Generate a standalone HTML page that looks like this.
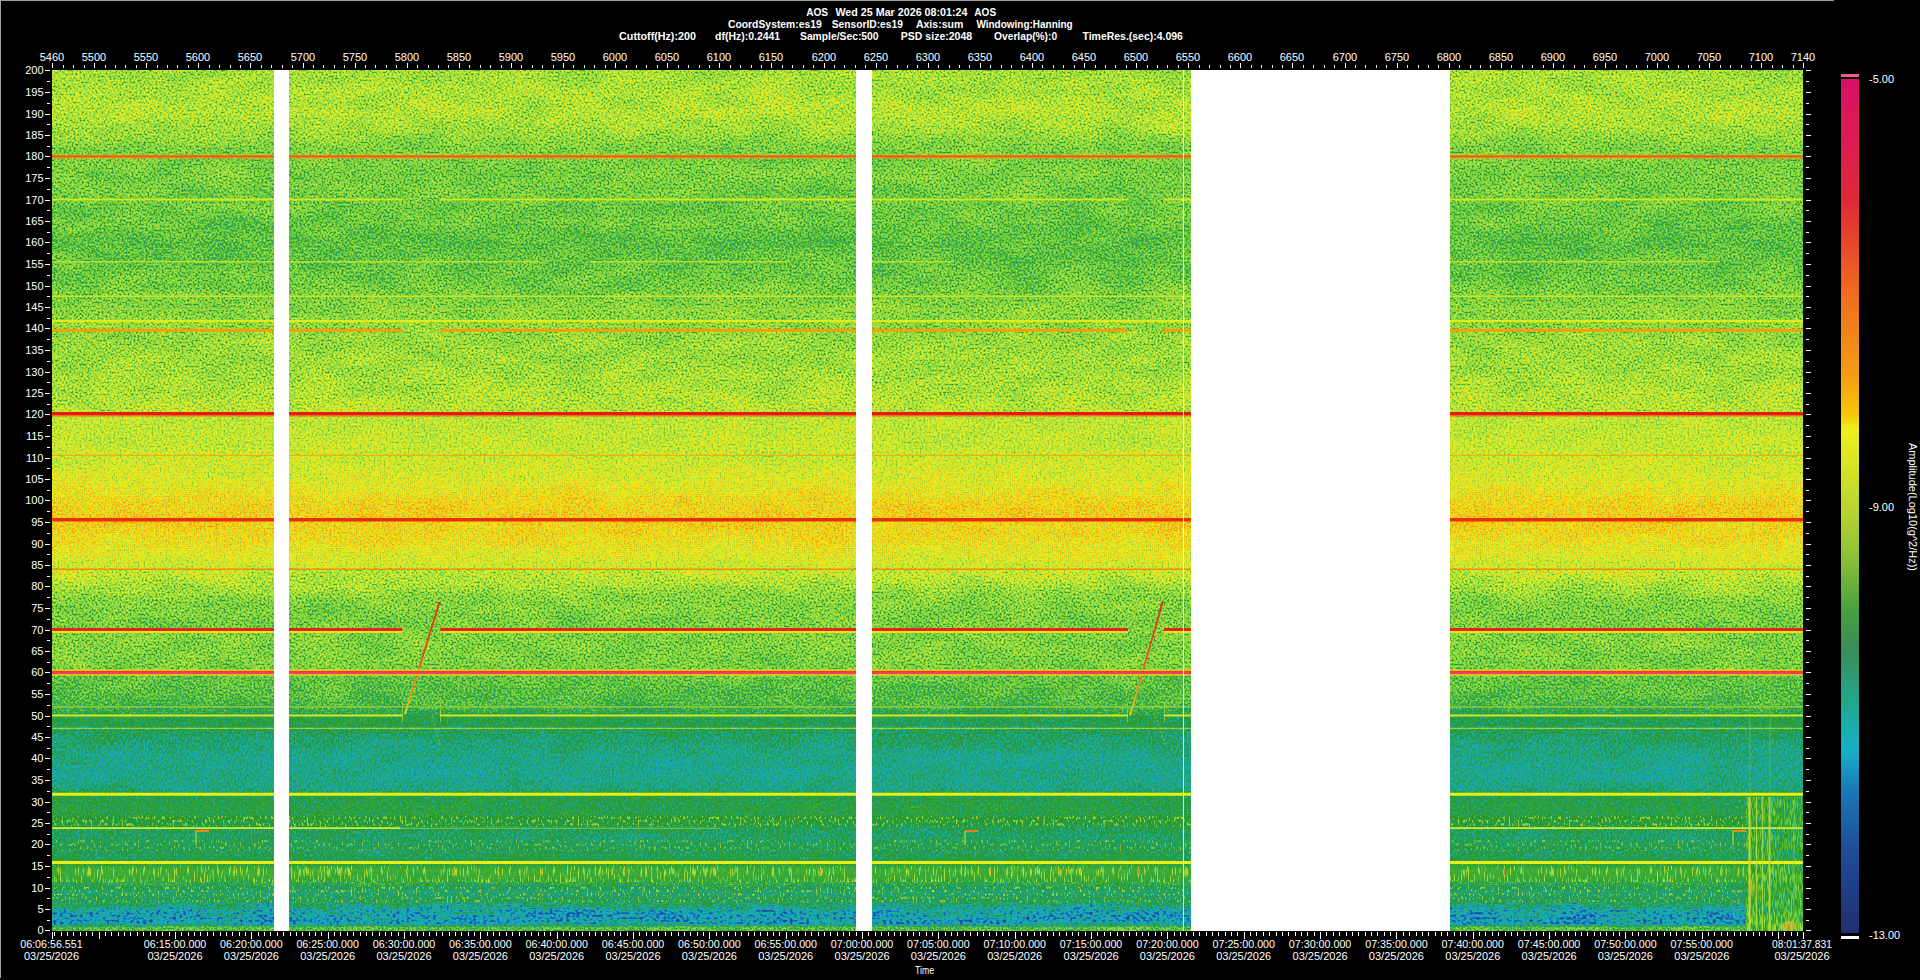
<!DOCTYPE html>
<html><head><meta charset="utf-8"><title>Spectrogram</title><style>
html,body{margin:0;padding:0;background:#000;width:1920px;height:980px;overflow:hidden}
svg{display:block}
text{font-family:"Liberation Sans",sans-serif;fill:#fff}
</style></head><body>
<svg width="1920" height="980" viewBox="0 0 1920 980">
<defs>
<linearGradient id="prof" x1="0" y1="70" x2="0" y2="931" gradientUnits="userSpaceOnUse">
<stop offset="0.0006" stop-color="rgb(125,125,125)"/>
<stop offset="0.0256" stop-color="rgb(128,128,128)"/>
<stop offset="0.0505" stop-color="rgb(131,131,131)"/>
<stop offset="0.0705" stop-color="rgb(125,125,125)"/>
<stop offset="0.0905" stop-color="rgb(113,113,113)"/>
<stop offset="0.1254" stop-color="rgb(112,112,112)"/>
<stop offset="0.1754" stop-color="rgb(108,108,108)"/>
<stop offset="0.2003" stop-color="rgb(103,103,103)"/>
<stop offset="0.2403" stop-color="rgb(108,108,108)"/>
<stop offset="0.2703" stop-color="rgb(115,115,115)"/>
<stop offset="0.3102" stop-color="rgb(122,122,122)"/>
<stop offset="0.3502" stop-color="rgb(125,125,125)"/>
<stop offset="0.3801" stop-color="rgb(130,130,130)"/>
<stop offset="0.4101" stop-color="rgb(134,134,134)"/>
<stop offset="0.4401" stop-color="rgb(136,136,136)"/>
<stop offset="0.4750" stop-color="rgb(142,142,142)"/>
<stop offset="0.5000" stop-color="rgb(152,152,152)"/>
<stop offset="0.5200" stop-color="rgb(156,156,156)"/>
<stop offset="0.5400" stop-color="rgb(152,152,152)"/>
<stop offset="0.5649" stop-color="rgb(143,143,143)"/>
<stop offset="0.5899" stop-color="rgb(133,133,133)"/>
<stop offset="0.6149" stop-color="rgb(116,116,116)"/>
<stop offset="0.6398" stop-color="rgb(112,112,112)"/>
<stop offset="0.6598" stop-color="rgb(115,115,115)"/>
<stop offset="0.6898" stop-color="rgb(113,113,113)"/>
<stop offset="0.7098" stop-color="rgb(105,105,105)"/>
<stop offset="0.7347" stop-color="rgb(99,99,99)"/>
<stop offset="0.7497" stop-color="rgb(84,84,84)"/>
<stop offset="0.7647" stop-color="rgb(79,79,79)"/>
<stop offset="0.7797" stop-color="rgb(74,74,74)"/>
<stop offset="0.7997" stop-color="rgb(69,69,69)"/>
<stop offset="0.8196" stop-color="rgb(68,68,68)"/>
<stop offset="0.8346" stop-color="rgb(71,71,71)"/>
<stop offset="0.8446" stop-color="rgb(82,82,82)"/>
<stop offset="0.8696" stop-color="rgb(84,84,84)"/>
<stop offset="0.8895" stop-color="rgb(76,76,76)"/>
<stop offset="0.9145" stop-color="rgb(79,79,79)"/>
<stop offset="0.9295" stop-color="rgb(94,94,94)"/>
<stop offset="0.9445" stop-color="rgb(89,89,89)"/>
<stop offset="0.9545" stop-color="rgb(71,71,71)"/>
<stop offset="0.9645" stop-color="rgb(79,79,79)"/>
<stop offset="0.9720" stop-color="rgb(69,69,69)"/>
<stop offset="0.9769" stop-color="rgb(59,59,59)"/>
<stop offset="0.9894" stop-color="rgb(54,54,54)"/>
<stop offset="0.9934" stop-color="rgb(66,66,66)"/>
<stop offset="0.9954" stop-color="rgb(102,102,102)"/>
<stop offset="0.9994" stop-color="rgb(102,102,102)"/>
</linearGradient>
<linearGradient id="bbg" x1="0" y1="797" x2="0" y2="931" gradientUnits="userSpaceOnUse">
<stop offset="0" stop-color="rgb(92,92,92)"/><stop offset="0.5" stop-color="rgb(90,90,90)"/><stop offset="0.8" stop-color="rgb(96,96,96)"/><stop offset="1" stop-color="rgb(104,104,104)"/>
</linearGradient>
<linearGradient id="dg1" x1="0" y1="602" x2="0" y2="714" gradientUnits="userSpaceOnUse"><stop offset="0" stop-color="#e02818"/><stop offset="0.5" stop-color="#e85018"/><stop offset="0.85" stop-color="#f0a018"/><stop offset="1" stop-color="#e0e020"/></linearGradient>
<linearGradient id="dg2" x1="0" y1="601" x2="0" y2="715" gradientUnits="userSpaceOnUse"><stop offset="0" stop-color="#e02818"/><stop offset="0.5" stop-color="#e85018"/><stop offset="0.85" stop-color="#f0a018"/><stop offset="1" stop-color="#e0e020"/></linearGradient>
<linearGradient id="cb" x1="0" y1="79" x2="0" y2="933" gradientUnits="userSpaceOnUse">
<stop offset="0.000" stop-color="#d8106a"/>
<stop offset="0.142" stop-color="#e02838"/>
<stop offset="0.247" stop-color="#ee6a20"/>
<stop offset="0.352" stop-color="#f5a014"/>
<stop offset="0.393" stop-color="#f8c808"/>
<stop offset="0.410" stop-color="#eef020"/>
<stop offset="0.423" stop-color="#e8ec20"/>
<stop offset="0.505" stop-color="#b8d430"/>
<stop offset="0.563" stop-color="#88c038"/>
<stop offset="0.622" stop-color="#48a040"/>
<stop offset="0.669" stop-color="#3a8c58"/>
<stop offset="0.733" stop-color="#20a890"/>
<stop offset="0.786" stop-color="#18b0c8"/>
<stop offset="0.833" stop-color="#1a78b8"/>
<stop offset="0.903" stop-color="#1e4c98"/>
<stop offset="1.000" stop-color="#203070"/>
</linearGradient>
<filter id="spec" x="52" y="70" width="1751" height="861" filterUnits="userSpaceOnUse" color-interpolation-filters="sRGB">
<feTurbulence type="fractalNoise" baseFrequency="0.5" numOctaves="2" seed="7" result="n"/>
<feColorMatrix in="n" type="matrix" values="1 0 0 0 0  1 0 0 0 0  1 0 0 0 0  0 0 0 0 1" result="ng0"/>
<feComponentTransfer in="ng0" result="ng"><feFuncR type="table" tableValues="0.270 0.281 0.292 0.303 0.314 0.325 0.336 0.347 0.358 0.374 0.392 0.410 0.428 0.446 0.464 0.482 0.500 0.515 0.531 0.541 0.548 0.556 0.563 0.568 0.572 0.573 0.574 0.575 0.576 0.577 0.578 0.579 0.581"/><feFuncG type="table" tableValues="0.270 0.281 0.292 0.303 0.314 0.325 0.336 0.347 0.358 0.374 0.392 0.410 0.428 0.446 0.464 0.482 0.500 0.515 0.531 0.541 0.548 0.556 0.563 0.568 0.572 0.573 0.574 0.575 0.576 0.577 0.578 0.579 0.581"/><feFuncB type="table" tableValues="0.270 0.281 0.292 0.303 0.314 0.325 0.336 0.347 0.358 0.374 0.392 0.410 0.428 0.446 0.464 0.482 0.500 0.515 0.531 0.541 0.548 0.556 0.563 0.568 0.572 0.573 0.574 0.575 0.576 0.577 0.578 0.579 0.581"/></feComponentTransfer>
<feTurbulence type="fractalNoise" baseFrequency="0.02 0.06" numOctaves="2" seed="10" result="lf"/>
<feColorMatrix in="lf" type="matrix" values="1 0 0 0 0  1 0 0 0 0  1 0 0 0 0  0 0 0 0 1" result="lfg"/>
<feComposite in="ng" in2="lfg" operator="arithmetic" k1="0" k2="1" k3="0.090" k4="-0.045" result="ngl"/>
<feComposite in="SourceGraphic" in2="ngl" operator="arithmetic" k1="0" k2="1" k3="1" k4="-0.5" result="v"/>
<feComponentTransfer in="v"><feFuncR type="table" tableValues="0.102 0.104 0.107 0.109 0.112 0.114 0.117 0.114 0.109 0.103 0.098 0.094 0.094 0.094 0.096 0.105 0.115 0.125 0.130 0.135 0.147 0.164 0.197 0.236 0.285 0.335 0.395 0.457 0.512 0.550 0.587 0.643 0.706 0.764 0.812 0.859 0.905 0.943 0.973 0.973 0.971 0.966 0.962 0.956 0.951 0.946 0.940 0.935 0.926 0.916 0.907 0.897 0.887 0.878 0.875 0.872 0.869 0.866 0.863 0.860 0.856 0.853 0.850 0.847"/><feFuncG type="table" tableValues="0.188 0.206 0.223 0.241 0.258 0.275 0.293 0.325 0.365 0.404 0.443 0.491 0.561 0.630 0.689 0.679 0.669 0.659 0.642 0.625 0.605 0.596 0.633 0.671 0.708 0.745 0.778 0.809 0.835 0.847 0.860 0.872 0.885 0.898 0.913 0.928 0.937 0.887 0.834 0.767 0.707 0.660 0.614 0.574 0.537 0.500 0.462 0.425 0.381 0.336 0.290 0.245 0.199 0.156 0.147 0.137 0.128 0.119 0.109 0.100 0.091 0.081 0.072 0.063"/><feFuncB type="table" tableValues="0.471 0.491 0.510 0.530 0.550 0.570 0.590 0.621 0.657 0.692 0.728 0.753 0.753 0.753 0.743 0.673 0.604 0.534 0.451 0.367 0.267 0.188 0.188 0.194 0.213 0.232 0.240 0.246 0.251 0.251 0.251 0.242 0.229 0.212 0.183 0.153 0.123 0.089 0.063 0.063 0.065 0.071 0.077 0.086 0.095 0.104 0.114 0.123 0.125 0.125 0.125 0.125 0.125 0.128 0.157 0.185 0.214 0.243 0.272 0.301 0.329 0.358 0.387 0.416"/><feFuncA type="linear" slope="0" intercept="1"/></feComponentTransfer>
</filter>
<filter id="yel" x="52" y="416" width="1751" height="152" filterUnits="userSpaceOnUse" color-interpolation-filters="sRGB">
<feTurbulence type="fractalNoise" baseFrequency="0.5" numOctaves="2" seed="13" result="n"/>
<feColorMatrix in="n" type="matrix" values="1 0 0 0 0  1 0 0 0 0  1 0 0 0 0  0 0 0 0 1" result="ng0"/>
<feComponentTransfer in="ng0" result="ng"><feFuncR type="table" tableValues="0.320 0.329 0.337 0.346 0.355 0.363 0.372 0.381 0.389 0.402 0.416 0.430 0.444 0.458 0.472 0.486 0.500 0.512 0.524 0.532 0.538 0.544 0.549 0.553 0.556 0.557 0.558 0.559 0.560 0.560 0.561 0.562 0.563"/><feFuncG type="table" tableValues="0.320 0.329 0.337 0.346 0.355 0.363 0.372 0.381 0.389 0.402 0.416 0.430 0.444 0.458 0.472 0.486 0.500 0.512 0.524 0.532 0.538 0.544 0.549 0.553 0.556 0.557 0.558 0.559 0.560 0.560 0.561 0.562 0.563"/><feFuncB type="table" tableValues="0.320 0.329 0.337 0.346 0.355 0.363 0.372 0.381 0.389 0.402 0.416 0.430 0.444 0.458 0.472 0.486 0.500 0.512 0.524 0.532 0.538 0.544 0.549 0.553 0.556 0.557 0.558 0.559 0.560 0.560 0.561 0.562 0.563"/></feComponentTransfer>
<feTurbulence type="fractalNoise" baseFrequency="0.02 0.06" numOctaves="2" seed="16" result="lf"/>
<feColorMatrix in="lf" type="matrix" values="1 0 0 0 0  1 0 0 0 0  1 0 0 0 0  0 0 0 0 1" result="lfg"/>
<feComposite in="ng" in2="lfg" operator="arithmetic" k1="0" k2="1" k3="0.060" k4="-0.030" result="ngl"/>
<feComposite in="SourceGraphic" in2="ngl" operator="arithmetic" k1="0" k2="1" k3="1" k4="-0.5" result="v"/>
<feComponentTransfer in="v"><feFuncR type="table" tableValues="0.102 0.104 0.107 0.109 0.112 0.114 0.117 0.114 0.109 0.103 0.098 0.094 0.094 0.094 0.096 0.105 0.115 0.125 0.130 0.135 0.147 0.164 0.197 0.236 0.285 0.335 0.395 0.457 0.512 0.550 0.587 0.643 0.706 0.764 0.812 0.859 0.905 0.943 0.973 0.973 0.971 0.966 0.962 0.956 0.951 0.946 0.940 0.935 0.926 0.916 0.907 0.897 0.887 0.878 0.875 0.872 0.869 0.866 0.863 0.860 0.856 0.853 0.850 0.847"/><feFuncG type="table" tableValues="0.188 0.206 0.223 0.241 0.258 0.275 0.293 0.325 0.365 0.404 0.443 0.491 0.561 0.630 0.689 0.679 0.669 0.659 0.642 0.625 0.605 0.596 0.633 0.671 0.708 0.745 0.778 0.809 0.835 0.847 0.860 0.872 0.885 0.898 0.913 0.928 0.937 0.887 0.834 0.767 0.707 0.660 0.614 0.574 0.537 0.500 0.462 0.425 0.381 0.336 0.290 0.245 0.199 0.156 0.147 0.137 0.128 0.119 0.109 0.100 0.091 0.081 0.072 0.063"/><feFuncB type="table" tableValues="0.471 0.491 0.510 0.530 0.550 0.570 0.590 0.621 0.657 0.692 0.728 0.753 0.753 0.753 0.743 0.673 0.604 0.534 0.451 0.367 0.267 0.188 0.188 0.194 0.213 0.232 0.240 0.246 0.251 0.251 0.251 0.242 0.229 0.212 0.183 0.153 0.123 0.089 0.063 0.063 0.065 0.071 0.077 0.086 0.095 0.104 0.114 0.123 0.125 0.125 0.125 0.125 0.125 0.128 0.157 0.185 0.214 0.243 0.272 0.301 0.329 0.358 0.387 0.416"/><feFuncA type="linear" slope="0" intercept="1"/></feComponentTransfer>
</filter>
<filter id="teal" x="52" y="716" width="1751" height="150" filterUnits="userSpaceOnUse" color-interpolation-filters="sRGB">
<feTurbulence type="fractalNoise" baseFrequency="0.55 0.35" numOctaves="2" seed="9" result="n"/>
<feColorMatrix in="n" type="matrix" values="1 0 0 0 0  1 0 0 0 0  1 0 0 0 0  0 0 0 0 1" result="ng0"/>
<feComponentTransfer in="ng0" result="ng"><feFuncR type="table" tableValues="0.376 0.382 0.388 0.394 0.400 0.406 0.412 0.418 0.424 0.432 0.442 0.452 0.461 0.471 0.481 0.490 0.500 0.508 0.517 0.522 0.526 0.530 0.534 0.537 0.539 0.539 0.540 0.540 0.541 0.542 0.542 0.543 0.543"/><feFuncG type="table" tableValues="0.376 0.382 0.388 0.394 0.400 0.406 0.412 0.418 0.424 0.432 0.442 0.452 0.461 0.471 0.481 0.490 0.500 0.508 0.517 0.522 0.526 0.530 0.534 0.537 0.539 0.539 0.540 0.540 0.541 0.542 0.542 0.543 0.543"/><feFuncB type="table" tableValues="0.376 0.382 0.388 0.394 0.400 0.406 0.412 0.418 0.424 0.432 0.442 0.452 0.461 0.471 0.481 0.490 0.500 0.508 0.517 0.522 0.526 0.530 0.534 0.537 0.539 0.539 0.540 0.540 0.541 0.542 0.542 0.543 0.543"/></feComponentTransfer>
<feTurbulence type="fractalNoise" baseFrequency="0.02 0.06" numOctaves="2" seed="12" result="lf"/>
<feColorMatrix in="lf" type="matrix" values="1 0 0 0 0  1 0 0 0 0  1 0 0 0 0  0 0 0 0 1" result="lfg"/>
<feComposite in="ng" in2="lfg" operator="arithmetic" k1="0" k2="1" k3="0.060" k4="-0.030" result="ngl"/>
<feComposite in="SourceGraphic" in2="ngl" operator="arithmetic" k1="0" k2="1" k3="1" k4="-0.5" result="v"/>
<feComponentTransfer in="v"><feFuncR type="table" tableValues="0.102 0.104 0.107 0.109 0.112 0.114 0.117 0.114 0.109 0.103 0.098 0.094 0.094 0.094 0.096 0.105 0.115 0.125 0.130 0.135 0.147 0.164 0.197 0.236 0.285 0.335 0.395 0.457 0.512 0.550 0.587 0.643 0.706 0.764 0.812 0.859 0.905 0.943 0.973 0.973 0.971 0.966 0.962 0.956 0.951 0.946 0.940 0.935 0.926 0.916 0.907 0.897 0.887 0.878 0.875 0.872 0.869 0.866 0.863 0.860 0.856 0.853 0.850 0.847"/><feFuncG type="table" tableValues="0.188 0.206 0.223 0.241 0.258 0.275 0.293 0.325 0.365 0.404 0.443 0.491 0.561 0.630 0.689 0.679 0.669 0.659 0.642 0.625 0.605 0.596 0.633 0.671 0.708 0.745 0.778 0.809 0.835 0.847 0.860 0.872 0.885 0.898 0.913 0.928 0.937 0.887 0.834 0.767 0.707 0.660 0.614 0.574 0.537 0.500 0.462 0.425 0.381 0.336 0.290 0.245 0.199 0.156 0.147 0.137 0.128 0.119 0.109 0.100 0.091 0.081 0.072 0.063"/><feFuncB type="table" tableValues="0.471 0.491 0.510 0.530 0.550 0.570 0.590 0.621 0.657 0.692 0.728 0.753 0.753 0.753 0.743 0.673 0.604 0.534 0.451 0.367 0.267 0.188 0.188 0.194 0.213 0.232 0.240 0.246 0.251 0.251 0.251 0.242 0.229 0.212 0.183 0.153 0.123 0.089 0.063 0.063 0.065 0.071 0.077 0.086 0.095 0.104 0.114 0.123 0.125 0.125 0.125 0.125 0.125 0.128 0.157 0.185 0.214 0.243 0.272 0.301 0.329 0.358 0.387 0.416"/><feFuncA type="linear" slope="0" intercept="1"/></feComponentTransfer>
</filter>
<filter id="streak" x="52" y="866" width="1751" height="16" filterUnits="userSpaceOnUse" color-interpolation-filters="sRGB">
<feTurbulence type="fractalNoise" baseFrequency="0.7 0.09" numOctaves="1" seed="11" result="n"/>
<feColorMatrix in="n" type="matrix" values="1 0 0 0 0  1 0 0 0 0  1 0 0 0 0  0 0 0 0 1" result="ng0"/>
<feComponentTransfer in="ng0" result="ng"><feFuncR type="table" tableValues="0.500 0.500 0.500 0.500 0.500 0.500 0.500 0.500 0.500 0.500 0.500 0.500 0.500 0.500 0.500 0.500 0.500 0.500 0.516 0.557 0.597 0.638 0.679 0.719 0.760 0.801 0.841 0.882 0.922 0.963 1.004 1.044 1.085"/><feFuncG type="table" tableValues="0.500 0.500 0.500 0.500 0.500 0.500 0.500 0.500 0.500 0.500 0.500 0.500 0.500 0.500 0.500 0.500 0.500 0.500 0.516 0.557 0.597 0.638 0.679 0.719 0.760 0.801 0.841 0.882 0.922 0.963 1.004 1.044 1.085"/><feFuncB type="table" tableValues="0.500 0.500 0.500 0.500 0.500 0.500 0.500 0.500 0.500 0.500 0.500 0.500 0.500 0.500 0.500 0.500 0.500 0.500 0.516 0.557 0.597 0.638 0.679 0.719 0.760 0.801 0.841 0.882 0.922 0.963 1.004 1.044 1.085"/></feComponentTransfer>
<feTurbulence type="fractalNoise" baseFrequency="0.02 0.06" numOctaves="2" seed="14" result="lf"/>
<feColorMatrix in="lf" type="matrix" values="1 0 0 0 0  1 0 0 0 0  1 0 0 0 0  0 0 0 0 1" result="lfg"/>
<feComposite in="ng" in2="lfg" operator="arithmetic" k1="0" k2="1" k3="0.000" k4="-0.000" result="ngl"/>
<feComposite in="SourceGraphic" in2="ngl" operator="arithmetic" k1="0" k2="1" k3="1" k4="-0.5" result="v"/>
<feComponentTransfer in="v"><feFuncR type="table" tableValues="0.102 0.104 0.107 0.109 0.112 0.114 0.117 0.114 0.109 0.103 0.098 0.094 0.094 0.094 0.096 0.105 0.115 0.125 0.130 0.135 0.147 0.164 0.197 0.236 0.285 0.335 0.395 0.457 0.512 0.550 0.587 0.643 0.706 0.764 0.812 0.859 0.905 0.943 0.973 0.973 0.971 0.966 0.962 0.956 0.951 0.946 0.940 0.935 0.926 0.916 0.907 0.897 0.887 0.878 0.875 0.872 0.869 0.866 0.863 0.860 0.856 0.853 0.850 0.847"/><feFuncG type="table" tableValues="0.188 0.206 0.223 0.241 0.258 0.275 0.293 0.325 0.365 0.404 0.443 0.491 0.561 0.630 0.689 0.679 0.669 0.659 0.642 0.625 0.605 0.596 0.633 0.671 0.708 0.745 0.778 0.809 0.835 0.847 0.860 0.872 0.885 0.898 0.913 0.928 0.937 0.887 0.834 0.767 0.707 0.660 0.614 0.574 0.537 0.500 0.462 0.425 0.381 0.336 0.290 0.245 0.199 0.156 0.147 0.137 0.128 0.119 0.109 0.100 0.091 0.081 0.072 0.063"/><feFuncB type="table" tableValues="0.471 0.491 0.510 0.530 0.550 0.570 0.590 0.621 0.657 0.692 0.728 0.753 0.753 0.753 0.743 0.673 0.604 0.534 0.451 0.367 0.267 0.188 0.188 0.194 0.213 0.232 0.240 0.246 0.251 0.251 0.251 0.242 0.229 0.212 0.183 0.153 0.123 0.089 0.063 0.063 0.065 0.071 0.077 0.086 0.095 0.104 0.114 0.123 0.125 0.125 0.125 0.125 0.125 0.128 0.157 0.185 0.214 0.243 0.272 0.301 0.329 0.358 0.387 0.416"/><feFuncA type="linear" slope="0" intercept="1"/></feComponentTransfer>
</filter>
<filter id="grass0" x="52" y="816" width="1751" height="11" filterUnits="userSpaceOnUse" color-interpolation-filters="sRGB">
<feTurbulence type="fractalNoise" baseFrequency="0.55 0.3" numOctaves="1" seed="30" result="n"/>
<feColorMatrix in="n" type="matrix" values="1 0 0 0 0  1 0 0 0 0  1 0 0 0 0  0 0 0 0 1" result="ng0"/>
<feComponentTransfer in="ng0" result="ng"><feFuncR type="table" tableValues="0.500 0.500 0.500 0.500 0.500 0.500 0.500 0.500 0.500 0.500 0.500 0.500 0.500 0.500 0.500 0.500 0.500 0.500 0.519 0.566 0.612 0.659 0.706 0.753 0.800 0.847 0.894 0.941 0.987 1.034 1.081 1.128 1.175"/><feFuncG type="table" tableValues="0.500 0.500 0.500 0.500 0.500 0.500 0.500 0.500 0.500 0.500 0.500 0.500 0.500 0.500 0.500 0.500 0.500 0.500 0.519 0.566 0.612 0.659 0.706 0.753 0.800 0.847 0.894 0.941 0.987 1.034 1.081 1.128 1.175"/><feFuncB type="table" tableValues="0.500 0.500 0.500 0.500 0.500 0.500 0.500 0.500 0.500 0.500 0.500 0.500 0.500 0.500 0.500 0.500 0.500 0.500 0.519 0.566 0.612 0.659 0.706 0.753 0.800 0.847 0.894 0.941 0.987 1.034 1.081 1.128 1.175"/></feComponentTransfer>
<feTurbulence type="fractalNoise" baseFrequency="0.02 0.06" numOctaves="2" seed="33" result="lf"/>
<feColorMatrix in="lf" type="matrix" values="1 0 0 0 0  1 0 0 0 0  1 0 0 0 0  0 0 0 0 1" result="lfg"/>
<feComposite in="ng" in2="lfg" operator="arithmetic" k1="0" k2="1" k3="0.000" k4="-0.000" result="ngl"/>
<feComposite in="SourceGraphic" in2="ngl" operator="arithmetic" k1="0" k2="1" k3="1" k4="-0.5" result="v"/>
<feComponentTransfer in="v"><feFuncR type="table" tableValues="0.102 0.104 0.107 0.109 0.112 0.114 0.117 0.114 0.109 0.103 0.098 0.094 0.094 0.094 0.096 0.105 0.115 0.125 0.130 0.135 0.147 0.164 0.197 0.236 0.285 0.335 0.395 0.457 0.512 0.550 0.587 0.643 0.706 0.764 0.812 0.859 0.905 0.943 0.973 0.973 0.971 0.966 0.962 0.956 0.951 0.946 0.940 0.935 0.926 0.916 0.907 0.897 0.887 0.878 0.875 0.872 0.869 0.866 0.863 0.860 0.856 0.853 0.850 0.847"/><feFuncG type="table" tableValues="0.188 0.206 0.223 0.241 0.258 0.275 0.293 0.325 0.365 0.404 0.443 0.491 0.561 0.630 0.689 0.679 0.669 0.659 0.642 0.625 0.605 0.596 0.633 0.671 0.708 0.745 0.778 0.809 0.835 0.847 0.860 0.872 0.885 0.898 0.913 0.928 0.937 0.887 0.834 0.767 0.707 0.660 0.614 0.574 0.537 0.500 0.462 0.425 0.381 0.336 0.290 0.245 0.199 0.156 0.147 0.137 0.128 0.119 0.109 0.100 0.091 0.081 0.072 0.063"/><feFuncB type="table" tableValues="0.471 0.491 0.510 0.530 0.550 0.570 0.590 0.621 0.657 0.692 0.728 0.753 0.753 0.753 0.743 0.673 0.604 0.534 0.451 0.367 0.267 0.188 0.188 0.194 0.213 0.232 0.240 0.246 0.251 0.251 0.251 0.242 0.229 0.212 0.183 0.153 0.123 0.089 0.063 0.063 0.065 0.071 0.077 0.086 0.095 0.104 0.114 0.123 0.125 0.125 0.125 0.125 0.125 0.128 0.157 0.185 0.214 0.243 0.272 0.301 0.329 0.358 0.387 0.416"/><feFuncA type="linear" slope="0" intercept="1"/></feComponentTransfer>
</filter>
<filter id="grass1" x="52" y="840" width="1751" height="11" filterUnits="userSpaceOnUse" color-interpolation-filters="sRGB">
<feTurbulence type="fractalNoise" baseFrequency="0.55 0.3" numOctaves="1" seed="31" result="n"/>
<feColorMatrix in="n" type="matrix" values="1 0 0 0 0  1 0 0 0 0  1 0 0 0 0  0 0 0 0 1" result="ng0"/>
<feComponentTransfer in="ng0" result="ng"><feFuncR type="table" tableValues="0.500 0.500 0.500 0.500 0.500 0.500 0.500 0.500 0.500 0.500 0.500 0.500 0.500 0.500 0.500 0.500 0.500 0.500 0.519 0.566 0.612 0.659 0.706 0.753 0.800 0.847 0.894 0.941 0.987 1.034 1.081 1.128 1.175"/><feFuncG type="table" tableValues="0.500 0.500 0.500 0.500 0.500 0.500 0.500 0.500 0.500 0.500 0.500 0.500 0.500 0.500 0.500 0.500 0.500 0.500 0.519 0.566 0.612 0.659 0.706 0.753 0.800 0.847 0.894 0.941 0.987 1.034 1.081 1.128 1.175"/><feFuncB type="table" tableValues="0.500 0.500 0.500 0.500 0.500 0.500 0.500 0.500 0.500 0.500 0.500 0.500 0.500 0.500 0.500 0.500 0.500 0.500 0.519 0.566 0.612 0.659 0.706 0.753 0.800 0.847 0.894 0.941 0.987 1.034 1.081 1.128 1.175"/></feComponentTransfer>
<feTurbulence type="fractalNoise" baseFrequency="0.02 0.06" numOctaves="2" seed="34" result="lf"/>
<feColorMatrix in="lf" type="matrix" values="1 0 0 0 0  1 0 0 0 0  1 0 0 0 0  0 0 0 0 1" result="lfg"/>
<feComposite in="ng" in2="lfg" operator="arithmetic" k1="0" k2="1" k3="0.000" k4="-0.000" result="ngl"/>
<feComposite in="SourceGraphic" in2="ngl" operator="arithmetic" k1="0" k2="1" k3="1" k4="-0.5" result="v"/>
<feComponentTransfer in="v"><feFuncR type="table" tableValues="0.102 0.104 0.107 0.109 0.112 0.114 0.117 0.114 0.109 0.103 0.098 0.094 0.094 0.094 0.096 0.105 0.115 0.125 0.130 0.135 0.147 0.164 0.197 0.236 0.285 0.335 0.395 0.457 0.512 0.550 0.587 0.643 0.706 0.764 0.812 0.859 0.905 0.943 0.973 0.973 0.971 0.966 0.962 0.956 0.951 0.946 0.940 0.935 0.926 0.916 0.907 0.897 0.887 0.878 0.875 0.872 0.869 0.866 0.863 0.860 0.856 0.853 0.850 0.847"/><feFuncG type="table" tableValues="0.188 0.206 0.223 0.241 0.258 0.275 0.293 0.325 0.365 0.404 0.443 0.491 0.561 0.630 0.689 0.679 0.669 0.659 0.642 0.625 0.605 0.596 0.633 0.671 0.708 0.745 0.778 0.809 0.835 0.847 0.860 0.872 0.885 0.898 0.913 0.928 0.937 0.887 0.834 0.767 0.707 0.660 0.614 0.574 0.537 0.500 0.462 0.425 0.381 0.336 0.290 0.245 0.199 0.156 0.147 0.137 0.128 0.119 0.109 0.100 0.091 0.081 0.072 0.063"/><feFuncB type="table" tableValues="0.471 0.491 0.510 0.530 0.550 0.570 0.590 0.621 0.657 0.692 0.728 0.753 0.753 0.753 0.743 0.673 0.604 0.534 0.451 0.367 0.267 0.188 0.188 0.194 0.213 0.232 0.240 0.246 0.251 0.251 0.251 0.242 0.229 0.212 0.183 0.153 0.123 0.089 0.063 0.063 0.065 0.071 0.077 0.086 0.095 0.104 0.114 0.123 0.125 0.125 0.125 0.125 0.125 0.128 0.157 0.185 0.214 0.243 0.272 0.301 0.329 0.358 0.387 0.416"/><feFuncA type="linear" slope="0" intercept="1"/></feComponentTransfer>
</filter>
<filter id="grass2" x="52" y="887" width="1751" height="9" filterUnits="userSpaceOnUse" color-interpolation-filters="sRGB">
<feTurbulence type="fractalNoise" baseFrequency="0.55 0.3" numOctaves="1" seed="32" result="n"/>
<feColorMatrix in="n" type="matrix" values="1 0 0 0 0  1 0 0 0 0  1 0 0 0 0  0 0 0 0 1" result="ng0"/>
<feComponentTransfer in="ng0" result="ng"><feFuncR type="table" tableValues="0.500 0.500 0.500 0.500 0.500 0.500 0.500 0.500 0.500 0.500 0.500 0.500 0.500 0.500 0.500 0.500 0.500 0.500 0.519 0.566 0.612 0.659 0.706 0.753 0.800 0.847 0.894 0.941 0.987 1.034 1.081 1.128 1.175"/><feFuncG type="table" tableValues="0.500 0.500 0.500 0.500 0.500 0.500 0.500 0.500 0.500 0.500 0.500 0.500 0.500 0.500 0.500 0.500 0.500 0.500 0.519 0.566 0.612 0.659 0.706 0.753 0.800 0.847 0.894 0.941 0.987 1.034 1.081 1.128 1.175"/><feFuncB type="table" tableValues="0.500 0.500 0.500 0.500 0.500 0.500 0.500 0.500 0.500 0.500 0.500 0.500 0.500 0.500 0.500 0.500 0.500 0.500 0.519 0.566 0.612 0.659 0.706 0.753 0.800 0.847 0.894 0.941 0.987 1.034 1.081 1.128 1.175"/></feComponentTransfer>
<feTurbulence type="fractalNoise" baseFrequency="0.02 0.06" numOctaves="2" seed="35" result="lf"/>
<feColorMatrix in="lf" type="matrix" values="1 0 0 0 0  1 0 0 0 0  1 0 0 0 0  0 0 0 0 1" result="lfg"/>
<feComposite in="ng" in2="lfg" operator="arithmetic" k1="0" k2="1" k3="0.000" k4="-0.000" result="ngl"/>
<feComposite in="SourceGraphic" in2="ngl" operator="arithmetic" k1="0" k2="1" k3="1" k4="-0.5" result="v"/>
<feComponentTransfer in="v"><feFuncR type="table" tableValues="0.102 0.104 0.107 0.109 0.112 0.114 0.117 0.114 0.109 0.103 0.098 0.094 0.094 0.094 0.096 0.105 0.115 0.125 0.130 0.135 0.147 0.164 0.197 0.236 0.285 0.335 0.395 0.457 0.512 0.550 0.587 0.643 0.706 0.764 0.812 0.859 0.905 0.943 0.973 0.973 0.971 0.966 0.962 0.956 0.951 0.946 0.940 0.935 0.926 0.916 0.907 0.897 0.887 0.878 0.875 0.872 0.869 0.866 0.863 0.860 0.856 0.853 0.850 0.847"/><feFuncG type="table" tableValues="0.188 0.206 0.223 0.241 0.258 0.275 0.293 0.325 0.365 0.404 0.443 0.491 0.561 0.630 0.689 0.679 0.669 0.659 0.642 0.625 0.605 0.596 0.633 0.671 0.708 0.745 0.778 0.809 0.835 0.847 0.860 0.872 0.885 0.898 0.913 0.928 0.937 0.887 0.834 0.767 0.707 0.660 0.614 0.574 0.537 0.500 0.462 0.425 0.381 0.336 0.290 0.245 0.199 0.156 0.147 0.137 0.128 0.119 0.109 0.100 0.091 0.081 0.072 0.063"/><feFuncB type="table" tableValues="0.471 0.491 0.510 0.530 0.550 0.570 0.590 0.621 0.657 0.692 0.728 0.753 0.753 0.753 0.743 0.673 0.604 0.534 0.451 0.367 0.267 0.188 0.188 0.194 0.213 0.232 0.240 0.246 0.251 0.251 0.251 0.242 0.229 0.212 0.183 0.153 0.123 0.089 0.063 0.063 0.065 0.071 0.077 0.086 0.095 0.104 0.114 0.123 0.125 0.125 0.125 0.125 0.125 0.128 0.157 0.185 0.214 0.243 0.272 0.301 0.329 0.358 0.387 0.416"/><feFuncA type="linear" slope="0" intercept="1"/></feComponentTransfer>
</filter>
<filter id="grass3" x="52" y="896" width="1751" height="8" filterUnits="userSpaceOnUse" color-interpolation-filters="sRGB">
<feTurbulence type="fractalNoise" baseFrequency="0.55 0.3" numOctaves="1" seed="33" result="n"/>
<feColorMatrix in="n" type="matrix" values="1 0 0 0 0  1 0 0 0 0  1 0 0 0 0  0 0 0 0 1" result="ng0"/>
<feComponentTransfer in="ng0" result="ng"><feFuncR type="table" tableValues="0.500 0.500 0.500 0.500 0.500 0.500 0.500 0.500 0.500 0.500 0.500 0.500 0.500 0.500 0.500 0.500 0.500 0.500 0.519 0.566 0.612 0.659 0.706 0.753 0.800 0.847 0.894 0.941 0.987 1.034 1.081 1.128 1.175"/><feFuncG type="table" tableValues="0.500 0.500 0.500 0.500 0.500 0.500 0.500 0.500 0.500 0.500 0.500 0.500 0.500 0.500 0.500 0.500 0.500 0.500 0.519 0.566 0.612 0.659 0.706 0.753 0.800 0.847 0.894 0.941 0.987 1.034 1.081 1.128 1.175"/><feFuncB type="table" tableValues="0.500 0.500 0.500 0.500 0.500 0.500 0.500 0.500 0.500 0.500 0.500 0.500 0.500 0.500 0.500 0.500 0.500 0.500 0.519 0.566 0.612 0.659 0.706 0.753 0.800 0.847 0.894 0.941 0.987 1.034 1.081 1.128 1.175"/></feComponentTransfer>
<feTurbulence type="fractalNoise" baseFrequency="0.02 0.06" numOctaves="2" seed="36" result="lf"/>
<feColorMatrix in="lf" type="matrix" values="1 0 0 0 0  1 0 0 0 0  1 0 0 0 0  0 0 0 0 1" result="lfg"/>
<feComposite in="ng" in2="lfg" operator="arithmetic" k1="0" k2="1" k3="0.000" k4="-0.000" result="ngl"/>
<feComposite in="SourceGraphic" in2="ngl" operator="arithmetic" k1="0" k2="1" k3="1" k4="-0.5" result="v"/>
<feComponentTransfer in="v"><feFuncR type="table" tableValues="0.102 0.104 0.107 0.109 0.112 0.114 0.117 0.114 0.109 0.103 0.098 0.094 0.094 0.094 0.096 0.105 0.115 0.125 0.130 0.135 0.147 0.164 0.197 0.236 0.285 0.335 0.395 0.457 0.512 0.550 0.587 0.643 0.706 0.764 0.812 0.859 0.905 0.943 0.973 0.973 0.971 0.966 0.962 0.956 0.951 0.946 0.940 0.935 0.926 0.916 0.907 0.897 0.887 0.878 0.875 0.872 0.869 0.866 0.863 0.860 0.856 0.853 0.850 0.847"/><feFuncG type="table" tableValues="0.188 0.206 0.223 0.241 0.258 0.275 0.293 0.325 0.365 0.404 0.443 0.491 0.561 0.630 0.689 0.679 0.669 0.659 0.642 0.625 0.605 0.596 0.633 0.671 0.708 0.745 0.778 0.809 0.835 0.847 0.860 0.872 0.885 0.898 0.913 0.928 0.937 0.887 0.834 0.767 0.707 0.660 0.614 0.574 0.537 0.500 0.462 0.425 0.381 0.336 0.290 0.245 0.199 0.156 0.147 0.137 0.128 0.119 0.109 0.100 0.091 0.081 0.072 0.063"/><feFuncB type="table" tableValues="0.471 0.491 0.510 0.530 0.550 0.570 0.590 0.621 0.657 0.692 0.728 0.753 0.753 0.753 0.743 0.673 0.604 0.534 0.451 0.367 0.267 0.188 0.188 0.194 0.213 0.232 0.240 0.246 0.251 0.251 0.251 0.242 0.229 0.212 0.183 0.153 0.123 0.089 0.063 0.063 0.065 0.071 0.077 0.086 0.095 0.104 0.114 0.123 0.125 0.125 0.125 0.125 0.125 0.128 0.157 0.185 0.214 0.243 0.272 0.301 0.329 0.358 0.387 0.416"/><feFuncA type="linear" slope="0" intercept="1"/></feComponentTransfer>
</filter>
<filter id="blob" x="52" y="903" width="1751" height="22" filterUnits="userSpaceOnUse" color-interpolation-filters="sRGB">
<feTurbulence type="fractalNoise" baseFrequency="0.3 0.4" numOctaves="1" seed="5" result="n"/>
<feColorMatrix in="n" type="matrix" values="1 0 0 0 0  1 0 0 0 0  1 0 0 0 0  0 0 0 0 1" result="ng0"/>
<feComponentTransfer in="ng0" result="ng"><feFuncR type="table" tableValues="0.310 0.319 0.328 0.337 0.347 0.356 0.365 0.374 0.383 0.396 0.411 0.426 0.441 0.455 0.470 0.485 0.500 0.513 0.525 0.533 0.540 0.547 0.552 0.556 0.559 0.560 0.561 0.562 0.563 0.564 0.565 0.566 0.567"/><feFuncG type="table" tableValues="0.310 0.319 0.328 0.337 0.347 0.356 0.365 0.374 0.383 0.396 0.411 0.426 0.441 0.455 0.470 0.485 0.500 0.513 0.525 0.533 0.540 0.547 0.552 0.556 0.559 0.560 0.561 0.562 0.563 0.564 0.565 0.566 0.567"/><feFuncB type="table" tableValues="0.310 0.319 0.328 0.337 0.347 0.356 0.365 0.374 0.383 0.396 0.411 0.426 0.441 0.455 0.470 0.485 0.500 0.513 0.525 0.533 0.540 0.547 0.552 0.556 0.559 0.560 0.561 0.562 0.563 0.564 0.565 0.566 0.567"/></feComponentTransfer>
<feTurbulence type="fractalNoise" baseFrequency="0.02 0.1" numOctaves="2" seed="8" result="lf"/>
<feColorMatrix in="lf" type="matrix" values="1 0 0 0 0  1 0 0 0 0  1 0 0 0 0  0 0 0 0 1" result="lfg"/>
<feComposite in="ng" in2="lfg" operator="arithmetic" k1="0" k2="1" k3="0.150" k4="-0.075" result="ngl"/>
<feComposite in="SourceGraphic" in2="ngl" operator="arithmetic" k1="0" k2="1" k3="1" k4="-0.5" result="v"/>
<feComponentTransfer in="v"><feFuncR type="table" tableValues="0.102 0.104 0.107 0.109 0.112 0.114 0.117 0.114 0.109 0.103 0.098 0.094 0.094 0.094 0.096 0.105 0.115 0.125 0.130 0.135 0.147 0.164 0.197 0.236 0.285 0.335 0.395 0.457 0.512 0.550 0.587 0.643 0.706 0.764 0.812 0.859 0.905 0.943 0.973 0.973 0.971 0.966 0.962 0.956 0.951 0.946 0.940 0.935 0.926 0.916 0.907 0.897 0.887 0.878 0.875 0.872 0.869 0.866 0.863 0.860 0.856 0.853 0.850 0.847"/><feFuncG type="table" tableValues="0.188 0.206 0.223 0.241 0.258 0.275 0.293 0.325 0.365 0.404 0.443 0.491 0.561 0.630 0.689 0.679 0.669 0.659 0.642 0.625 0.605 0.596 0.633 0.671 0.708 0.745 0.778 0.809 0.835 0.847 0.860 0.872 0.885 0.898 0.913 0.928 0.937 0.887 0.834 0.767 0.707 0.660 0.614 0.574 0.537 0.500 0.462 0.425 0.381 0.336 0.290 0.245 0.199 0.156 0.147 0.137 0.128 0.119 0.109 0.100 0.091 0.081 0.072 0.063"/><feFuncB type="table" tableValues="0.471 0.491 0.510 0.530 0.550 0.570 0.590 0.621 0.657 0.692 0.728 0.753 0.753 0.753 0.743 0.673 0.604 0.534 0.451 0.367 0.267 0.188 0.188 0.194 0.213 0.232 0.240 0.246 0.251 0.251 0.251 0.242 0.229 0.212 0.183 0.153 0.123 0.089 0.063 0.063 0.065 0.071 0.077 0.086 0.095 0.104 0.114 0.123 0.125 0.125 0.125 0.125 0.125 0.128 0.157 0.185 0.214 0.243 0.272 0.301 0.329 0.358 0.387 0.416"/><feFuncA type="linear" slope="0" intercept="1"/></feComponentTransfer>
</filter>
<filter id="bb" x="1746" y="797" width="57" height="134" filterUnits="userSpaceOnUse" color-interpolation-filters="sRGB">
<feTurbulence type="fractalNoise" baseFrequency="0.7 0.12" numOctaves="1" seed="21" result="n"/>
<feColorMatrix in="n" type="matrix" values="1 0 0 0 0  1 0 0 0 0  1 0 0 0 0  0 0 0 0 1" result="ng0"/>
<feComponentTransfer in="ng0" result="ng"><feFuncR type="table" tableValues="0.280 0.291 0.301 0.312 0.322 0.333 0.343 0.354 0.365 0.380 0.397 0.414 0.431 0.448 0.466 0.483 0.500 0.515 0.529 0.539 0.546 0.554 0.560 0.565 0.569 0.570 0.571 0.572 0.573 0.574 0.575 0.576 0.577"/><feFuncG type="table" tableValues="0.280 0.291 0.301 0.312 0.322 0.333 0.343 0.354 0.365 0.380 0.397 0.414 0.431 0.448 0.466 0.483 0.500 0.515 0.529 0.539 0.546 0.554 0.560 0.565 0.569 0.570 0.571 0.572 0.573 0.574 0.575 0.576 0.577"/><feFuncB type="table" tableValues="0.280 0.291 0.301 0.312 0.322 0.333 0.343 0.354 0.365 0.380 0.397 0.414 0.431 0.448 0.466 0.483 0.500 0.515 0.529 0.539 0.546 0.554 0.560 0.565 0.569 0.570 0.571 0.572 0.573 0.574 0.575 0.576 0.577"/></feComponentTransfer>
<feTurbulence type="fractalNoise" baseFrequency="0.02 0.06" numOctaves="2" seed="24" result="lf"/>
<feColorMatrix in="lf" type="matrix" values="1 0 0 0 0  1 0 0 0 0  1 0 0 0 0  0 0 0 0 1" result="lfg"/>
<feComposite in="ng" in2="lfg" operator="arithmetic" k1="0" k2="1" k3="0.100" k4="-0.050" result="ngl"/>
<feComposite in="SourceGraphic" in2="ngl" operator="arithmetic" k1="0" k2="1" k3="1" k4="-0.5" result="v"/>
<feComponentTransfer in="v"><feFuncR type="table" tableValues="0.102 0.104 0.107 0.109 0.112 0.114 0.117 0.114 0.109 0.103 0.098 0.094 0.094 0.094 0.096 0.105 0.115 0.125 0.130 0.135 0.147 0.164 0.197 0.236 0.285 0.335 0.395 0.457 0.512 0.550 0.587 0.643 0.706 0.764 0.812 0.859 0.905 0.943 0.973 0.973 0.971 0.966 0.962 0.956 0.951 0.946 0.940 0.935 0.926 0.916 0.907 0.897 0.887 0.878 0.875 0.872 0.869 0.866 0.863 0.860 0.856 0.853 0.850 0.847"/><feFuncG type="table" tableValues="0.188 0.206 0.223 0.241 0.258 0.275 0.293 0.325 0.365 0.404 0.443 0.491 0.561 0.630 0.689 0.679 0.669 0.659 0.642 0.625 0.605 0.596 0.633 0.671 0.708 0.745 0.778 0.809 0.835 0.847 0.860 0.872 0.885 0.898 0.913 0.928 0.937 0.887 0.834 0.767 0.707 0.660 0.614 0.574 0.537 0.500 0.462 0.425 0.381 0.336 0.290 0.245 0.199 0.156 0.147 0.137 0.128 0.119 0.109 0.100 0.091 0.081 0.072 0.063"/><feFuncB type="table" tableValues="0.471 0.491 0.510 0.530 0.550 0.570 0.590 0.621 0.657 0.692 0.728 0.753 0.753 0.753 0.743 0.673 0.604 0.534 0.451 0.367 0.267 0.188 0.188 0.194 0.213 0.232 0.240 0.246 0.251 0.251 0.251 0.242 0.229 0.212 0.183 0.153 0.123 0.089 0.063 0.063 0.065 0.071 0.077 0.086 0.095 0.104 0.114 0.123 0.125 0.125 0.125 0.125 0.125 0.128 0.157 0.185 0.214 0.243 0.272 0.301 0.329 0.358 0.387 0.416"/><feFuncA type="linear" slope="0" intercept="1"/></feComponentTransfer>
</filter>
</defs>
<rect x="0" y="0" width="1834" height="1" fill="#a0a0a0"/>
<rect x="0" y="0" width="1" height="978" fill="#a0a0a0"/>
<rect x="52" y="70" width="1751" height="861" fill="url(#prof)" filter="url(#spec)"/>
<rect x="52" y="416" width="1751" height="152" fill="url(#prof)" filter="url(#yel)"/>
<rect x="52" y="716" width="1751" height="150" fill="url(#prof)" filter="url(#teal)"/>
<rect x="52" y="866" width="1751" height="16" fill="url(#prof)" filter="url(#streak)" opacity="0.75"/>
<rect x="52" y="816" width="1751" height="11" fill="url(#prof)" filter="url(#grass0)" opacity="0.7"/>
<rect x="52" y="840" width="1751" height="11" fill="url(#prof)" filter="url(#grass1)" opacity="0.55"/>
<rect x="52" y="887" width="1751" height="9" fill="url(#prof)" filter="url(#grass2)" opacity="0.75"/>
<rect x="52" y="896" width="1751" height="8" fill="url(#prof)" filter="url(#grass3)" opacity="0.6"/>
<rect x="52" y="903" width="1751" height="22" fill="url(#prof)" filter="url(#blob)"/>
<rect x="1746" y="797" width="57" height="134" fill="url(#bbg)" filter="url(#bb)"/>
<g><line x1="439.5" y1="602" x2="405" y2="714" stroke="url(#dg1)" stroke-width="1.8"/>
<line x1="1163" y1="601" x2="1130" y2="715.5" stroke="url(#dg2)" stroke-width="1.8"/>
<line x1="402.5" y1="702" x2="402.5" y2="722" stroke="#c8e030" stroke-width="1" opacity="0.6"/>
<line x1="402.5" y1="618" x2="402.5" y2="642" stroke="#b8e040" stroke-width="1" opacity="0.45"/>
<line x1="440.5" y1="702" x2="440.5" y2="722" stroke="#c8e030" stroke-width="1" opacity="0.6"/>
<line x1="440.5" y1="618" x2="440.5" y2="642" stroke="#b8e040" stroke-width="1" opacity="0.45"/>
<line x1="1127.5" y1="702" x2="1127.5" y2="722" stroke="#c8e030" stroke-width="1" opacity="0.6"/>
<line x1="1127.5" y1="618" x2="1127.5" y2="642" stroke="#b8e040" stroke-width="1" opacity="0.45"/>
<line x1="1164.5" y1="702" x2="1164.5" y2="722" stroke="#c8e030" stroke-width="1" opacity="0.6"/>
<line x1="1164.5" y1="618" x2="1164.5" y2="642" stroke="#b8e040" stroke-width="1" opacity="0.45"/>
<line x1="432" y1="716" x2="440" y2="745" stroke="#b0dc40" stroke-width="1.2" opacity="0.5" stroke-dasharray="2 2"/>
<line x1="1156" y1="716" x2="1165" y2="745" stroke="#b0dc40" stroke-width="1.2" opacity="0.5" stroke-dasharray="2 2"/>
<line x1="52.0" y1="155.10" x2="1803.0" y2="155.10" stroke="#e8c830" stroke-width="1.2"/>
<line x1="52.0" y1="156.50" x2="1803.0" y2="156.50" stroke="#e0640c" stroke-width="2.6"/>
<line x1="52.0" y1="158.10" x2="1803.0" y2="158.10" stroke="#f0a030" stroke-width="1.0"/>
<line x1="52.0" y1="199.50" x2="402.5" y2="199.50" stroke="#d0e820" stroke-width="2.2"/>
<line x1="440.3" y1="199.50" x2="1128.0" y2="199.50" stroke="#d0e820" stroke-width="2.2"/>
<line x1="1164.0" y1="199.50" x2="1803.0" y2="199.50" stroke="#d0e820" stroke-width="2.2"/>
<line x1="52.0" y1="261.85" x2="540.0" y2="261.85" stroke="#b8e030" stroke-width="1.5"/>
<line x1="590.0" y1="261.85" x2="790.0" y2="261.85" stroke="#b8e030" stroke-width="1.5"/>
<line x1="872.0" y1="261.85" x2="954.0" y2="261.85" stroke="#b8e030" stroke-width="1.5"/>
<line x1="1450.0" y1="261.85" x2="1720.0" y2="261.85" stroke="#b8e030" stroke-width="1.5"/>
<line x1="52.0" y1="296.25" x2="1803.0" y2="296.25" stroke="#c8e428" stroke-width="1.7"/>
<line x1="52.0" y1="309.15" x2="274.0" y2="309.15" stroke="#a8d838" stroke-width="1.2"/>
<line x1="390.0" y1="309.15" x2="856.0" y2="309.15" stroke="#a8d838" stroke-width="1.2"/>
<line x1="872.0" y1="309.15" x2="954.0" y2="309.15" stroke="#a8d838" stroke-width="1.2"/>
<line x1="1450.0" y1="309.15" x2="1803.0" y2="309.15" stroke="#a8d838" stroke-width="1.2"/>
<line x1="52.0" y1="321.19" x2="1803.0" y2="321.19" stroke="#e0ec18" stroke-width="2.2"/>
<line x1="52.0" y1="330.22" x2="402.5" y2="330.22" stroke="#f0a010" stroke-width="3.0"/>
<line x1="440.3" y1="330.22" x2="1128.0" y2="330.22" stroke="#f0a010" stroke-width="3.0"/>
<line x1="1164.0" y1="330.22" x2="1803.0" y2="330.22" stroke="#f0a010" stroke-width="3.0"/>
<line x1="52.0" y1="415.75" x2="1803.0" y2="415.75" stroke="#f07020" stroke-width="1.5"/>
<line x1="52.0" y1="413.50" x2="1803.0" y2="413.50" stroke="#e01c14" stroke-width="3.0"/>
<line x1="52.0" y1="455.35" x2="1803.0" y2="455.35" stroke="#f0b010" stroke-width="1.4"/>
<line x1="52.0" y1="519.85" x2="1803.0" y2="519.85" stroke="#e83010" stroke-width="3.5"/>
<line x1="52.0" y1="569.30" x2="1803.0" y2="569.30" stroke="#f09010" stroke-width="1.4"/>
<line x1="52.0" y1="632.00" x2="402.5" y2="632.00" stroke="#e8e020" stroke-width="2.0"/>
<line x1="52.0" y1="629.50" x2="402.5" y2="629.50" stroke="#e02818" stroke-width="3.0"/>
<line x1="440.3" y1="632.00" x2="1128.0" y2="632.00" stroke="#e8e020" stroke-width="2.0"/>
<line x1="440.3" y1="629.50" x2="1128.0" y2="629.50" stroke="#e02818" stroke-width="3.0"/>
<line x1="1164.0" y1="632.00" x2="1803.0" y2="632.00" stroke="#e8e020" stroke-width="2.0"/>
<line x1="1164.0" y1="629.50" x2="1803.0" y2="629.50" stroke="#e02818" stroke-width="3.0"/>
<line x1="52.0" y1="672.50" x2="1803.0" y2="672.50" stroke="#f0e020" stroke-width="6.0"/>
<line x1="52.0" y1="672.50" x2="1803.0" y2="672.50" stroke="#e84020" stroke-width="3.6"/>
<line x1="52.0" y1="673.10" x2="1803.0" y2="673.10" stroke="#f04068" stroke-width="1.6"/>
<line x1="52.0" y1="706.90" x2="1803.0" y2="706.90" stroke="#a0d040" stroke-width="1.2"/>
<line x1="52.0" y1="715.50" x2="402.5" y2="715.50" stroke="#d0e828" stroke-width="2.0"/>
<line x1="440.3" y1="715.50" x2="1128.0" y2="715.50" stroke="#d0e828" stroke-width="2.0"/>
<line x1="1164.0" y1="715.50" x2="1803.0" y2="715.50" stroke="#d0e828" stroke-width="2.0"/>
<line x1="52.0" y1="728.40" x2="1803.0" y2="728.40" stroke="#90c840" stroke-width="1.2"/>
<line x1="52.0" y1="794.19" x2="1803.0" y2="794.19" stroke="#e8f010" stroke-width="3.0"/>
<line x1="52.0" y1="828.16" x2="274.0" y2="828.16" stroke="#d8ec20" stroke-width="1.8"/>
<line x1="289.0" y1="828.16" x2="400.0" y2="828.16" stroke="#d8ec20" stroke-width="1.8"/>
<line x1="1450.0" y1="828.16" x2="1803.0" y2="828.16" stroke="#d8ec20" stroke-width="1.8"/>
<line x1="52.0" y1="862.56" x2="1803.0" y2="862.56" stroke="#e8f018" stroke-width="3.0"/>
<line x1="400" y1="828.4" x2="720" y2="828.4" stroke="#c8e430" stroke-width="1.2" opacity="0.45"/>
<line x1="52" y1="728.4" x2="274" y2="728.4" stroke="#b8e030" stroke-width="1.5" opacity="0.50" stroke-dasharray="4 2 5 2 5 6 5 4 1 3 2 6 1 1 1 2 3 1 3 4 1 4 2 1 5 1 3 2 2 3 2 1 2 4 4 3 2 1 1 1 2 1 2 1 2 2 2 4 5 6 2 1 5 1 3 2 1 2 3 1 2 2 1 2 2 4 4 1 4 6 5 2 1 2 2 2 3 6 2 1 3 3 5 1 1 2"/>
<line x1="289" y1="728.4" x2="856" y2="728.4" stroke="#b8e030" stroke-width="1.5" opacity="0.50" stroke-dasharray="1 6 2 3 1 4 3 2 3 4 1 3 1 6 2 4 2 1 2 3 2 4 2 4 2 3 1 4 5 2 2 1 3 1 2 2 4 4 2 1 2 2 5 4 1 2 5 2 2 1 1 6 2 6 5 2 3 1 5 1 1 4 4 3 1 1 5 4 2 2 3 6 3 1 1 6 1 3 2 1 2 6 4 1 5 3 1 1 3 2 2 1 3 2 2 3 4 1 4 3 3 6 5 2 3 2 2 3 3 1 1 3 4 1 5 3 2 1 1 3 2 4 4 4 2 1 2 6 4 6 1 2 2 4 5 6 2 3 2 6 5 2 2 6 2 4 1 3 4 2 2 6 2 3 2 4 5 6 2 2 2 6 2 6 3 2 2 6 3 2 2 4 2 4 2 1 2 3 2 6 1 6 5 6 3 1 4 4 4 6 3 2 4 4"/>
<line x1="872" y1="728.4" x2="1191" y2="728.4" stroke="#b8e030" stroke-width="1.5" opacity="0.50" stroke-dasharray="5 2 5 1 2 1 4 3 4 6 2 1 5 1 5 6 1 3 2 1 1 1 1 2 2 3 2 4 1 3 3 2 3 6 4 1 4 1 2 6 2 1 2 3 2 3 1 6 4 2 1 4 4 2 1 2 4 4 2 4 2 2 2 3 3 4 5 4 2 3 2 1 4 3 4 3 2 1 4 1 2 6 1 3 1 2 4 4 4 1 2 6 4 3 3 3 2 3 2 3 5 3 3 1 4 4 2 6 2 3 2 3 1 2"/>
<line x1="1450" y1="728.4" x2="1803" y2="728.4" stroke="#b8e030" stroke-width="1.5" opacity="0.50" stroke-dasharray="2 3 2 1 3 1 1 6 4 3 2 2 1 1 3 1 3 4 4 2 2 3 1 1 3 2 2 6 2 2 3 4 3 4 5 4 5 1 1 1 2 2 4 6 2 4 2 6 4 1 3 2 2 6 5 4 2 1 1 2 4 3 5 1 5 4 2 1 3 3 4 4 5 6 5 6 3 3 3 3 5 6 2 2 3 1 2 1 5 3 4 2 5 3 2 1 2 3 5 4 3 2 4 1 3 4 4 1 1 6 2 2 1 1 5 1 2 6 3 1 3 6"/>
<line x1="196" y1="831" x2="209" y2="831" stroke="#f08020" stroke-width="2"/>
<line x1="196" y1="831" x2="196" y2="845" stroke="#d0e030" stroke-width="1"/>
<line x1="965" y1="831" x2="978" y2="831" stroke="#f08020" stroke-width="2"/>
<line x1="965" y1="831" x2="965" y2="845" stroke="#d0e030" stroke-width="1"/>
<line x1="1733" y1="831" x2="1746" y2="831" stroke="#f08020" stroke-width="2"/>
<line x1="1733" y1="831" x2="1733" y2="845" stroke="#d0e030" stroke-width="1"/>
<line x1="431.5" y1="321" x2="431.5" y2="333" stroke="#f0a010" stroke-width="1"/>
<line x1="1155.5" y1="321" x2="1155.5" y2="333" stroke="#f0a010" stroke-width="1"/>
<line x1="1749.5" y1="797" x2="1749.5" y2="931" stroke="#e8d820" stroke-width="2.0" opacity="0.90"/>
<line x1="1756.5" y1="797" x2="1756.5" y2="931" stroke="#c8e030" stroke-width="1.2" opacity="0.80"/>
<line x1="1762.5" y1="797" x2="1762.5" y2="931" stroke="#c8e030" stroke-width="1.2" opacity="0.70"/>
<line x1="1769.5" y1="797" x2="1769.5" y2="931" stroke="#e0d020" stroke-width="1.6" opacity="0.85"/>
<line x1="1794.0" y1="800" x2="1794.0" y2="931" stroke="#a8d840" stroke-width="1.0" opacity="0.50"/>
<line x1="1750.0" y1="640" x2="1750.0" y2="931" stroke="#a8d840" stroke-width="1.0" opacity="0.35"/>
<line x1="1770.0" y1="640" x2="1770.0" y2="931" stroke="#a8d840" stroke-width="1.0" opacity="0.35"/>
<ellipse cx="1789" cy="926" rx="7" ry="5" fill="#f0b020" opacity="0.6"/>
<ellipse cx="1752" cy="888" rx="3" ry="9" fill="#f0c020" opacity="0.4"/></g>
<rect x="274" y="70" width="15" height="861" fill="#fff"/>
<rect x="856" y="70" width="16" height="861" fill="#fff"/>
<rect x="1191" y="70" width="259" height="861" fill="#fff"/>
<rect x="1183" y="70" width="1" height="861" fill="#fff" opacity="0.8"/>
<rect x="1841" y="79" width="18" height="854" fill="url(#cb)"/>
<rect x="1841" y="74" width="18" height="3" fill="#e8608a"/>
<rect x="1841" y="936" width="18" height="3" fill="#fff"/>
<path d="M52.5 63 V68 M63.5 65 V68 M73.5 65 V68 M84.5 65 V68 M94.5 63 V68 M105.5 65 V68 M115.5 65 V68 M125.5 65 V68 M136.5 65 V68 M146.5 63 V68 M157.5 65 V68 M167.5 65 V68 M177.5 65 V68 M188.5 65 V68 M198.5 63 V68 M209.5 65 V68 M219.5 65 V68 M230.5 65 V68 M240.5 65 V68 M250.5 63 V68 M261.5 65 V68 M271.5 65 V68 M282.5 65 V68 M292.5 65 V68 M303.5 63 V68 M313.5 65 V68 M323.5 65 V68 M334.5 65 V68 M344.5 65 V68 M355.5 63 V68 M365.5 65 V68 M375.5 65 V68 M386.5 65 V68 M396.5 65 V68 M407.5 63 V68 M417.5 65 V68 M428.5 65 V68 M438.5 65 V68 M448.5 65 V68 M459.5 63 V68 M469.5 65 V68 M480.5 65 V68 M490.5 65 V68 M501.5 65 V68 M511.5 63 V68 M521.5 65 V68 M532.5 65 V68 M542.5 65 V68 M553.5 65 V68 M563.5 63 V68 M573.5 65 V68 M584.5 65 V68 M594.5 65 V68 M605.5 65 V68 M615.5 63 V68 M626.5 65 V68 M636.5 65 V68 M646.5 65 V68 M657.5 65 V68 M667.5 63 V68 M678.5 65 V68 M688.5 65 V68 M699.5 65 V68 M709.5 65 V68 M719.5 63 V68 M730.5 65 V68 M740.5 65 V68 M751.5 65 V68 M761.5 65 V68 M771.5 63 V68 M782.5 65 V68 M792.5 65 V68 M803.5 65 V68 M813.5 65 V68 M824.5 63 V68 M834.5 65 V68 M844.5 65 V68 M855.5 65 V68 M865.5 65 V68 M876.5 63 V68 M886.5 65 V68 M897.5 65 V68 M907.5 65 V68 M917.5 65 V68 M928.5 63 V68 M938.5 65 V68 M949.5 65 V68 M959.5 65 V68 M969.5 65 V68 M980.5 63 V68 M990.5 65 V68 M1001.5 65 V68 M1011.5 65 V68 M1022.5 65 V68 M1032.5 63 V68 M1042.5 65 V68 M1053.5 65 V68 M1063.5 65 V68 M1074.5 65 V68 M1084.5 63 V68 M1095.5 65 V68 M1105.5 65 V68 M1115.5 65 V68 M1126.5 65 V68 M1136.5 63 V68 M1147.5 65 V68 M1157.5 65 V68 M1167.5 65 V68 M1178.5 65 V68 M1188.5 63 V68 M1199.5 65 V68 M1209.5 65 V68 M1220.5 65 V68 M1230.5 65 V68 M1240.5 63 V68 M1251.5 65 V68 M1261.5 65 V68 M1272.5 65 V68 M1282.5 65 V68 M1292.5 63 V68 M1303.5 65 V68 M1313.5 65 V68 M1324.5 65 V68 M1334.5 65 V68 M1345.5 63 V68 M1355.5 65 V68 M1365.5 65 V68 M1376.5 65 V68 M1386.5 65 V68 M1397.5 63 V68 M1407.5 65 V68 M1418.5 65 V68 M1428.5 65 V68 M1438.5 65 V68 M1449.5 63 V68 M1459.5 65 V68 M1470.5 65 V68 M1480.5 65 V68 M1490.5 65 V68 M1501.5 63 V68 M1511.5 65 V68 M1522.5 65 V68 M1532.5 65 V68 M1543.5 65 V68 M1553.5 63 V68 M1563.5 65 V68 M1574.5 65 V68 M1584.5 65 V68 M1595.5 65 V68 M1605.5 63 V68 M1616.5 65 V68 M1626.5 65 V68 M1636.5 65 V68 M1647.5 65 V68 M1657.5 63 V68 M1668.5 65 V68 M1678.5 65 V68 M1688.5 65 V68 M1699.5 65 V68 M1709.5 63 V68 M1720.5 65 V68 M1730.5 65 V68 M1741.5 65 V68 M1751.5 65 V68 M1761.5 63 V68 M1772.5 65 V68 M1782.5 65 V68 M1793.5 65 V68 M1803.5 63 V68 M45 930.5 H50 M1806 930.5 H1811 M47 920.5 H50 M1806 920.5 H1809 M45 909.5 H50 M1806 909.5 H1811 M47 898.5 H50 M1806 898.5 H1809 M45 888.5 H50 M1806 888.5 H1811 M47 877.5 H50 M1806 877.5 H1809 M45 866.5 H50 M1806 866.5 H1811 M47 855.5 H50 M1806 855.5 H1809 M45 844.5 H50 M1806 844.5 H1811 M47 834.5 H50 M1806 834.5 H1809 M45 823.5 H50 M1806 823.5 H1811 M47 812.5 H50 M1806 812.5 H1809 M45 802.5 H50 M1806 802.5 H1811 M47 791.5 H50 M1806 791.5 H1809 M45 780.5 H50 M1806 780.5 H1811 M47 769.5 H50 M1806 769.5 H1809 M45 758.5 H50 M1806 758.5 H1811 M47 748.5 H50 M1806 748.5 H1809 M45 737.5 H50 M1806 737.5 H1811 M47 726.5 H50 M1806 726.5 H1809 M45 716.5 H50 M1806 716.5 H1811 M47 705.5 H50 M1806 705.5 H1809 M45 694.5 H50 M1806 694.5 H1811 M47 683.5 H50 M1806 683.5 H1809 M45 672.5 H50 M1806 672.5 H1811 M47 662.5 H50 M1806 662.5 H1809 M45 651.5 H50 M1806 651.5 H1811 M47 640.5 H50 M1806 640.5 H1809 M45 630.5 H50 M1806 630.5 H1811 M47 619.5 H50 M1806 619.5 H1809 M45 608.5 H50 M1806 608.5 H1811 M47 597.5 H50 M1806 597.5 H1809 M45 586.5 H50 M1806 586.5 H1811 M47 576.5 H50 M1806 576.5 H1809 M45 565.5 H50 M1806 565.5 H1811 M47 554.5 H50 M1806 554.5 H1809 M45 544.5 H50 M1806 544.5 H1811 M47 533.5 H50 M1806 533.5 H1809 M45 522.5 H50 M1806 522.5 H1811 M47 511.5 H50 M1806 511.5 H1809 M45 500.5 H50 M1806 500.5 H1811 M47 490.5 H50 M1806 490.5 H1809 M45 479.5 H50 M1806 479.5 H1811 M47 468.5 H50 M1806 468.5 H1809 M45 458.5 H50 M1806 458.5 H1811 M47 447.5 H50 M1806 447.5 H1809 M45 436.5 H50 M1806 436.5 H1811 M47 425.5 H50 M1806 425.5 H1809 M45 414.5 H50 M1806 414.5 H1811 M47 404.5 H50 M1806 404.5 H1809 M45 393.5 H50 M1806 393.5 H1811 M47 382.5 H50 M1806 382.5 H1809 M45 372.5 H50 M1806 372.5 H1811 M47 361.5 H50 M1806 361.5 H1809 M45 350.5 H50 M1806 350.5 H1811 M47 339.5 H50 M1806 339.5 H1809 M45 328.5 H50 M1806 328.5 H1811 M47 318.5 H50 M1806 318.5 H1809 M45 307.5 H50 M1806 307.5 H1811 M47 296.5 H50 M1806 296.5 H1809 M45 286.5 H50 M1806 286.5 H1811 M47 275.5 H50 M1806 275.5 H1809 M45 264.5 H50 M1806 264.5 H1811 M47 253.5 H50 M1806 253.5 H1809 M45 242.5 H50 M1806 242.5 H1811 M47 232.5 H50 M1806 232.5 H1809 M45 221.5 H50 M1806 221.5 H1811 M47 210.5 H50 M1806 210.5 H1809 M45 200.5 H50 M1806 200.5 H1811 M47 189.5 H50 M1806 189.5 H1809 M45 178.5 H50 M1806 178.5 H1811 M47 167.5 H50 M1806 167.5 H1809 M45 156.5 H50 M1806 156.5 H1811 M47 146.5 H50 M1806 146.5 H1809 M45 135.5 H50 M1806 135.5 H1811 M47 124.5 H50 M1806 124.5 H1809 M45 114.5 H50 M1806 114.5 H1811 M47 103.5 H50 M1806 103.5 H1809 M45 92.5 H50 M1806 92.5 H1811 M47 81.5 H50 M1806 81.5 H1809 M45 70.5 H50 M1806 70.5 H1811 M54.5 932 V936 M61.5 932 V936 M67.5 932 V936 M73.5 932 V936 M80.5 932 V936 M86.5 932 V936 M92.5 932 V936 M99.5 932 V939 M105.5 932 V936 M111.5 932 V936 M118.5 932 V936 M124.5 932 V936 M130.5 932 V936 M137.5 932 V936 M143.5 932 V936 M150.5 932 V936 M156.5 932 V936 M162.5 932 V936 M169.5 932 V936 M175.5 932 V939 M181.5 932 V936 M188.5 932 V936 M194.5 932 V936 M200.5 932 V936 M207.5 932 V936 M213.5 932 V936 M220.5 932 V936 M226.5 932 V936 M232.5 932 V936 M239.5 932 V936 M245.5 932 V936 M251.5 932 V939 M258.5 932 V936 M264.5 932 V936 M270.5 932 V936 M277.5 932 V936 M283.5 932 V936 M290.5 932 V936 M296.5 932 V936 M302.5 932 V936 M309.5 932 V936 M315.5 932 V936 M321.5 932 V936 M328.5 932 V939 M334.5 932 V936 M340.5 932 V936 M347.5 932 V936 M353.5 932 V936 M360.5 932 V936 M366.5 932 V936 M372.5 932 V936 M379.5 932 V936 M385.5 932 V936 M391.5 932 V936 M398.5 932 V936 M404.5 932 V939 M410.5 932 V936 M417.5 932 V936 M423.5 932 V936 M429.5 932 V936 M436.5 932 V936 M442.5 932 V936 M449.5 932 V936 M455.5 932 V936 M461.5 932 V936 M468.5 932 V936 M474.5 932 V936 M480.5 932 V939 M487.5 932 V936 M493.5 932 V936 M499.5 932 V936 M506.5 932 V936 M512.5 932 V936 M519.5 932 V936 M525.5 932 V936 M531.5 932 V936 M538.5 932 V936 M544.5 932 V936 M550.5 932 V936 M557.5 932 V939 M563.5 932 V936 M569.5 932 V936 M576.5 932 V936 M582.5 932 V936 M589.5 932 V936 M595.5 932 V936 M601.5 932 V936 M608.5 932 V936 M614.5 932 V936 M620.5 932 V936 M627.5 932 V936 M633.5 932 V939 M639.5 932 V936 M646.5 932 V936 M652.5 932 V936 M658.5 932 V936 M665.5 932 V936 M671.5 932 V936 M678.5 932 V936 M684.5 932 V936 M690.5 932 V936 M697.5 932 V936 M703.5 932 V936 M709.5 932 V939 M716.5 932 V936 M722.5 932 V936 M728.5 932 V936 M735.5 932 V936 M741.5 932 V936 M748.5 932 V936 M754.5 932 V936 M760.5 932 V936 M767.5 932 V936 M773.5 932 V936 M779.5 932 V936 M786.5 932 V939 M792.5 932 V936 M798.5 932 V936 M805.5 932 V936 M811.5 932 V936 M818.5 932 V936 M824.5 932 V936 M830.5 932 V936 M837.5 932 V936 M843.5 932 V936 M849.5 932 V936 M856.5 932 V936 M862.5 932 V939 M868.5 932 V936 M875.5 932 V936 M881.5 932 V936 M888.5 932 V936 M894.5 932 V936 M900.5 932 V936 M907.5 932 V936 M913.5 932 V936 M919.5 932 V936 M926.5 932 V936 M932.5 932 V936 M938.5 932 V939 M945.5 932 V936 M951.5 932 V936 M957.5 932 V936 M964.5 932 V936 M970.5 932 V936 M977.5 932 V936 M983.5 932 V936 M989.5 932 V936 M996.5 932 V936 M1002.5 932 V936 M1008.5 932 V936 M1015.5 932 V939 M1021.5 932 V936 M1027.5 932 V936 M1034.5 932 V936 M1040.5 932 V936 M1047.5 932 V936 M1053.5 932 V936 M1059.5 932 V936 M1066.5 932 V936 M1072.5 932 V936 M1078.5 932 V936 M1085.5 932 V936 M1091.5 932 V939 M1097.5 932 V936 M1104.5 932 V936 M1110.5 932 V936 M1117.5 932 V936 M1123.5 932 V936 M1129.5 932 V936 M1136.5 932 V936 M1142.5 932 V936 M1148.5 932 V936 M1155.5 932 V936 M1161.5 932 V936 M1167.5 932 V939 M1174.5 932 V936 M1180.5 932 V936 M1186.5 932 V936 M1193.5 932 V936 M1199.5 932 V936 M1206.5 932 V936 M1212.5 932 V936 M1218.5 932 V936 M1225.5 932 V936 M1231.5 932 V936 M1237.5 932 V936 M1244.5 932 V939 M1250.5 932 V936 M1256.5 932 V936 M1263.5 932 V936 M1269.5 932 V936 M1276.5 932 V936 M1282.5 932 V936 M1288.5 932 V936 M1295.5 932 V936 M1301.5 932 V936 M1307.5 932 V936 M1314.5 932 V936 M1320.5 932 V939 M1326.5 932 V936 M1333.5 932 V936 M1339.5 932 V936 M1346.5 932 V936 M1352.5 932 V936 M1358.5 932 V936 M1365.5 932 V936 M1371.5 932 V936 M1377.5 932 V936 M1384.5 932 V936 M1390.5 932 V936 M1396.5 932 V939 M1403.5 932 V936 M1409.5 932 V936 M1416.5 932 V936 M1422.5 932 V936 M1428.5 932 V936 M1435.5 932 V936 M1441.5 932 V936 M1447.5 932 V936 M1454.5 932 V936 M1460.5 932 V936 M1466.5 932 V936 M1473.5 932 V939 M1479.5 932 V936 M1485.5 932 V936 M1492.5 932 V936 M1498.5 932 V936 M1505.5 932 V936 M1511.5 932 V936 M1517.5 932 V936 M1524.5 932 V936 M1530.5 932 V936 M1536.5 932 V936 M1543.5 932 V936 M1549.5 932 V939 M1555.5 932 V936 M1562.5 932 V936 M1568.5 932 V936 M1575.5 932 V936 M1581.5 932 V936 M1587.5 932 V936 M1594.5 932 V936 M1600.5 932 V936 M1606.5 932 V936 M1613.5 932 V936 M1619.5 932 V936 M1625.5 932 V939 M1632.5 932 V936 M1638.5 932 V936 M1645.5 932 V936 M1651.5 932 V936 M1657.5 932 V936 M1664.5 932 V936 M1670.5 932 V936 M1676.5 932 V936 M1683.5 932 V936 M1689.5 932 V936 M1695.5 932 V936 M1702.5 932 V939 M1708.5 932 V936 M1714.5 932 V936 M1721.5 932 V936 M1727.5 932 V936 M1734.5 932 V936 M1740.5 932 V936 M1746.5 932 V936 M1753.5 932 V936 M1759.5 932 V936 M1765.5 932 V936 M1772.5 932 V936 M1778.5 932 V939 M1784.5 932 V936 M1791.5 932 V936 M1797.5 932 V936 M52.5 932 V939 M1803.5 932 V939" stroke="#fff" stroke-width="1" fill="none"/>
<text x="52.0" y="60.5" text-anchor="middle" font-size="11" font-weight="normal" >5460</text>
<text x="94.0" y="60.5" text-anchor="middle" font-size="11" font-weight="normal" >5500</text>
<text x="146.0" y="60.5" text-anchor="middle" font-size="11" font-weight="normal" >5550</text>
<text x="198.0" y="60.5" text-anchor="middle" font-size="11" font-weight="normal" >5600</text>
<text x="250.0" y="60.5" text-anchor="middle" font-size="11" font-weight="normal" >5650</text>
<text x="303.0" y="60.5" text-anchor="middle" font-size="11" font-weight="normal" >5700</text>
<text x="355.0" y="60.5" text-anchor="middle" font-size="11" font-weight="normal" >5750</text>
<text x="407.0" y="60.5" text-anchor="middle" font-size="11" font-weight="normal" >5800</text>
<text x="459.0" y="60.5" text-anchor="middle" font-size="11" font-weight="normal" >5850</text>
<text x="511.0" y="60.5" text-anchor="middle" font-size="11" font-weight="normal" >5900</text>
<text x="563.0" y="60.5" text-anchor="middle" font-size="11" font-weight="normal" >5950</text>
<text x="615.0" y="60.5" text-anchor="middle" font-size="11" font-weight="normal" >6000</text>
<text x="667.0" y="60.5" text-anchor="middle" font-size="11" font-weight="normal" >6050</text>
<text x="719.0" y="60.5" text-anchor="middle" font-size="11" font-weight="normal" >6100</text>
<text x="771.0" y="60.5" text-anchor="middle" font-size="11" font-weight="normal" >6150</text>
<text x="824.0" y="60.5" text-anchor="middle" font-size="11" font-weight="normal" >6200</text>
<text x="876.0" y="60.5" text-anchor="middle" font-size="11" font-weight="normal" >6250</text>
<text x="928.0" y="60.5" text-anchor="middle" font-size="11" font-weight="normal" >6300</text>
<text x="980.0" y="60.5" text-anchor="middle" font-size="11" font-weight="normal" >6350</text>
<text x="1032.0" y="60.5" text-anchor="middle" font-size="11" font-weight="normal" >6400</text>
<text x="1084.0" y="60.5" text-anchor="middle" font-size="11" font-weight="normal" >6450</text>
<text x="1136.0" y="60.5" text-anchor="middle" font-size="11" font-weight="normal" >6500</text>
<text x="1188.0" y="60.5" text-anchor="middle" font-size="11" font-weight="normal" >6550</text>
<text x="1240.0" y="60.5" text-anchor="middle" font-size="11" font-weight="normal" >6600</text>
<text x="1292.0" y="60.5" text-anchor="middle" font-size="11" font-weight="normal" >6650</text>
<text x="1345.0" y="60.5" text-anchor="middle" font-size="11" font-weight="normal" >6700</text>
<text x="1397.0" y="60.5" text-anchor="middle" font-size="11" font-weight="normal" >6750</text>
<text x="1449.0" y="60.5" text-anchor="middle" font-size="11" font-weight="normal" >6800</text>
<text x="1501.0" y="60.5" text-anchor="middle" font-size="11" font-weight="normal" >6850</text>
<text x="1553.0" y="60.5" text-anchor="middle" font-size="11" font-weight="normal" >6900</text>
<text x="1605.0" y="60.5" text-anchor="middle" font-size="11" font-weight="normal" >6950</text>
<text x="1657.0" y="60.5" text-anchor="middle" font-size="11" font-weight="normal" >7000</text>
<text x="1709.0" y="60.5" text-anchor="middle" font-size="11" font-weight="normal" >7050</text>
<text x="1761.0" y="60.5" text-anchor="middle" font-size="11" font-weight="normal" >7100</text>
<text x="1803.0" y="60.5" text-anchor="middle" font-size="11" font-weight="normal" >7140</text>
<text x="43.5" y="933.5" text-anchor="end" font-size="11" font-weight="normal" >0</text>
<text x="43.5" y="912.5" text-anchor="end" font-size="11" font-weight="normal" >5</text>
<text x="43.5" y="891.5" text-anchor="end" font-size="11" font-weight="normal" >10</text>
<text x="43.5" y="869.5" text-anchor="end" font-size="11" font-weight="normal" >15</text>
<text x="43.5" y="847.5" text-anchor="end" font-size="11" font-weight="normal" >20</text>
<text x="43.5" y="826.5" text-anchor="end" font-size="11" font-weight="normal" >25</text>
<text x="43.5" y="805.5" text-anchor="end" font-size="11" font-weight="normal" >30</text>
<text x="43.5" y="783.5" text-anchor="end" font-size="11" font-weight="normal" >35</text>
<text x="43.5" y="761.5" text-anchor="end" font-size="11" font-weight="normal" >40</text>
<text x="43.5" y="740.5" text-anchor="end" font-size="11" font-weight="normal" >45</text>
<text x="43.5" y="719.5" text-anchor="end" font-size="11" font-weight="normal" >50</text>
<text x="43.5" y="697.5" text-anchor="end" font-size="11" font-weight="normal" >55</text>
<text x="43.5" y="675.5" text-anchor="end" font-size="11" font-weight="normal" >60</text>
<text x="43.5" y="654.5" text-anchor="end" font-size="11" font-weight="normal" >65</text>
<text x="43.5" y="633.5" text-anchor="end" font-size="11" font-weight="normal" >70</text>
<text x="43.5" y="611.5" text-anchor="end" font-size="11" font-weight="normal" >75</text>
<text x="43.5" y="589.5" text-anchor="end" font-size="11" font-weight="normal" >80</text>
<text x="43.5" y="568.5" text-anchor="end" font-size="11" font-weight="normal" >85</text>
<text x="43.5" y="547.5" text-anchor="end" font-size="11" font-weight="normal" >90</text>
<text x="43.5" y="525.5" text-anchor="end" font-size="11" font-weight="normal" >95</text>
<text x="43.5" y="503.5" text-anchor="end" font-size="11" font-weight="normal" >100</text>
<text x="43.5" y="482.5" text-anchor="end" font-size="11" font-weight="normal" >105</text>
<text x="43.5" y="461.5" text-anchor="end" font-size="11" font-weight="normal" >110</text>
<text x="43.5" y="439.5" text-anchor="end" font-size="11" font-weight="normal" >115</text>
<text x="43.5" y="417.5" text-anchor="end" font-size="11" font-weight="normal" >120</text>
<text x="43.5" y="396.5" text-anchor="end" font-size="11" font-weight="normal" >125</text>
<text x="43.5" y="375.5" text-anchor="end" font-size="11" font-weight="normal" >130</text>
<text x="43.5" y="353.5" text-anchor="end" font-size="11" font-weight="normal" >135</text>
<text x="43.5" y="331.5" text-anchor="end" font-size="11" font-weight="normal" >140</text>
<text x="43.5" y="310.5" text-anchor="end" font-size="11" font-weight="normal" >145</text>
<text x="43.5" y="289.5" text-anchor="end" font-size="11" font-weight="normal" >150</text>
<text x="43.5" y="267.5" text-anchor="end" font-size="11" font-weight="normal" >155</text>
<text x="43.5" y="245.5" text-anchor="end" font-size="11" font-weight="normal" >160</text>
<text x="43.5" y="224.5" text-anchor="end" font-size="11" font-weight="normal" >165</text>
<text x="43.5" y="203.5" text-anchor="end" font-size="11" font-weight="normal" >170</text>
<text x="43.5" y="181.5" text-anchor="end" font-size="11" font-weight="normal" >175</text>
<text x="43.5" y="159.5" text-anchor="end" font-size="11" font-weight="normal" >180</text>
<text x="43.5" y="138.5" text-anchor="end" font-size="11" font-weight="normal" >185</text>
<text x="43.5" y="117.5" text-anchor="end" font-size="11" font-weight="normal" >190</text>
<text x="43.5" y="95.5" text-anchor="end" font-size="11" font-weight="normal" >195</text>
<text x="43.5" y="73.5" text-anchor="end" font-size="11" font-weight="normal" >200</text>
<text x="20.2" y="948.0" font-size="11" textLength="62.5" lengthAdjust="spacingAndGlyphs">06:06:56.551</text>
<text x="51.5" y="960.0" text-anchor="middle" font-size="11" font-weight="normal" >03/25/2026</text>
<text x="143.8" y="948.0" font-size="11" textLength="62.5" lengthAdjust="spacingAndGlyphs">06:15:00.000</text>
<text x="175.0" y="960.0" text-anchor="middle" font-size="11" font-weight="normal" >03/25/2026</text>
<text x="220.1" y="948.0" font-size="11" textLength="62.5" lengthAdjust="spacingAndGlyphs">06:20:00.000</text>
<text x="251.4" y="960.0" text-anchor="middle" font-size="11" font-weight="normal" >03/25/2026</text>
<text x="296.4" y="948.0" font-size="11" textLength="62.5" lengthAdjust="spacingAndGlyphs">06:25:00.000</text>
<text x="327.7" y="960.0" text-anchor="middle" font-size="11" font-weight="normal" >03/25/2026</text>
<text x="372.8" y="948.0" font-size="11" textLength="62.5" lengthAdjust="spacingAndGlyphs">06:30:00.000</text>
<text x="404.0" y="960.0" text-anchor="middle" font-size="11" font-weight="normal" >03/25/2026</text>
<text x="449.1" y="948.0" font-size="11" textLength="62.5" lengthAdjust="spacingAndGlyphs">06:35:00.000</text>
<text x="480.4" y="960.0" text-anchor="middle" font-size="11" font-weight="normal" >03/25/2026</text>
<text x="525.5" y="948.0" font-size="11" textLength="62.5" lengthAdjust="spacingAndGlyphs">06:40:00.000</text>
<text x="556.7" y="960.0" text-anchor="middle" font-size="11" font-weight="normal" >03/25/2026</text>
<text x="601.8" y="948.0" font-size="11" textLength="62.5" lengthAdjust="spacingAndGlyphs">06:45:00.000</text>
<text x="633.0" y="960.0" text-anchor="middle" font-size="11" font-weight="normal" >03/25/2026</text>
<text x="678.1" y="948.0" font-size="11" textLength="62.5" lengthAdjust="spacingAndGlyphs">06:50:00.000</text>
<text x="709.4" y="960.0" text-anchor="middle" font-size="11" font-weight="normal" >03/25/2026</text>
<text x="754.5" y="948.0" font-size="11" textLength="62.5" lengthAdjust="spacingAndGlyphs">06:55:00.000</text>
<text x="785.7" y="960.0" text-anchor="middle" font-size="11" font-weight="normal" >03/25/2026</text>
<text x="830.8" y="948.0" font-size="11" textLength="62.5" lengthAdjust="spacingAndGlyphs">07:00:00.000</text>
<text x="862.1" y="960.0" text-anchor="middle" font-size="11" font-weight="normal" >03/25/2026</text>
<text x="907.1" y="948.0" font-size="11" textLength="62.5" lengthAdjust="spacingAndGlyphs">07:05:00.000</text>
<text x="938.4" y="960.0" text-anchor="middle" font-size="11" font-weight="normal" >03/25/2026</text>
<text x="983.5" y="948.0" font-size="11" textLength="62.5" lengthAdjust="spacingAndGlyphs">07:10:00.000</text>
<text x="1014.7" y="960.0" text-anchor="middle" font-size="11" font-weight="normal" >03/25/2026</text>
<text x="1059.8" y="948.0" font-size="11" textLength="62.5" lengthAdjust="spacingAndGlyphs">07:15:00.000</text>
<text x="1091.1" y="960.0" text-anchor="middle" font-size="11" font-weight="normal" >03/25/2026</text>
<text x="1136.2" y="948.0" font-size="11" textLength="62.5" lengthAdjust="spacingAndGlyphs">07:20:00.000</text>
<text x="1167.4" y="960.0" text-anchor="middle" font-size="11" font-weight="normal" >03/25/2026</text>
<text x="1212.5" y="948.0" font-size="11" textLength="62.5" lengthAdjust="spacingAndGlyphs">07:25:00.000</text>
<text x="1243.7" y="960.0" text-anchor="middle" font-size="11" font-weight="normal" >03/25/2026</text>
<text x="1288.8" y="948.0" font-size="11" textLength="62.5" lengthAdjust="spacingAndGlyphs">07:30:00.000</text>
<text x="1320.1" y="960.0" text-anchor="middle" font-size="11" font-weight="normal" >03/25/2026</text>
<text x="1365.2" y="948.0" font-size="11" textLength="62.5" lengthAdjust="spacingAndGlyphs">07:35:00.000</text>
<text x="1396.4" y="960.0" text-anchor="middle" font-size="11" font-weight="normal" >03/25/2026</text>
<text x="1441.5" y="948.0" font-size="11" textLength="62.5" lengthAdjust="spacingAndGlyphs">07:40:00.000</text>
<text x="1472.8" y="960.0" text-anchor="middle" font-size="11" font-weight="normal" >03/25/2026</text>
<text x="1517.8" y="948.0" font-size="11" textLength="62.5" lengthAdjust="spacingAndGlyphs">07:45:00.000</text>
<text x="1549.1" y="960.0" text-anchor="middle" font-size="11" font-weight="normal" >03/25/2026</text>
<text x="1594.2" y="948.0" font-size="11" textLength="62.5" lengthAdjust="spacingAndGlyphs">07:50:00.000</text>
<text x="1625.4" y="960.0" text-anchor="middle" font-size="11" font-weight="normal" >03/25/2026</text>
<text x="1670.5" y="948.0" font-size="11" textLength="62.5" lengthAdjust="spacingAndGlyphs">07:55:00.000</text>
<text x="1701.8" y="960.0" text-anchor="middle" font-size="11" font-weight="normal" >03/25/2026</text>
<text x="1772.0" y="948.0" font-size="11" textLength="60.0" lengthAdjust="spacingAndGlyphs">08:01:37.831</text>
<text x="1802.0" y="960.0" text-anchor="middle" font-size="11" font-weight="normal" >03/25/2026</text>
<text x="915" y="974" font-size="11" textLength="19" lengthAdjust="spacingAndGlyphs">Time</text>
<text x="1869.0" y="83.0" text-anchor="start" font-size="11" font-weight="normal" >-5.00</text>
<text x="1869.0" y="511.0" text-anchor="start" font-size="11" font-weight="normal" >-9.00</text>
<text x="1869.0" y="939.0" text-anchor="start" font-size="11" font-weight="normal" >-13.00</text>
<text x="0" y="0" transform="translate(1909,507) rotate(90)" text-anchor="middle" font-size="11">Amplitude(Log10(g^2/Hz))</text>
<text x="806.2" y="16.0" font-size="11" font-weight="bold" textLength="21.9" lengthAdjust="spacingAndGlyphs">AOS</text>
<text x="835.4" y="16.0" font-size="11" font-weight="bold" textLength="132.1" lengthAdjust="spacingAndGlyphs">Wed 25 Mar 2026 08:01:24</text>
<text x="974.3" y="16.0" font-size="11" font-weight="bold" textLength="21.8" lengthAdjust="spacingAndGlyphs">AOS</text>
<text x="727.9" y="28.0" font-size="11" font-weight="bold" textLength="94.0" lengthAdjust="spacingAndGlyphs">CoordSystem:es19</text>
<text x="831.8" y="28.0" font-size="11" font-weight="bold" textLength="71.1" lengthAdjust="spacingAndGlyphs">SensorID:es19</text>
<text x="915.9" y="28.0" font-size="11" font-weight="bold" textLength="47.4" lengthAdjust="spacingAndGlyphs">Axis:sum</text>
<text x="976.4" y="28.0" font-size="11" font-weight="bold" textLength="96.3" lengthAdjust="spacingAndGlyphs">Windowing:Hanning</text>
<text x="619.1" y="39.5" font-size="11" font-weight="bold" textLength="76.8" lengthAdjust="spacingAndGlyphs">Cuttoff(Hz):200</text>
<text x="715.1" y="39.5" font-size="11" font-weight="bold" textLength="65.1" lengthAdjust="spacingAndGlyphs">df(Hz):0.2441</text>
<text x="800.0" y="39.5" font-size="11" font-weight="bold" textLength="78.6" lengthAdjust="spacingAndGlyphs">Sample/Sec:500</text>
<text x="900.8" y="39.5" font-size="11" font-weight="bold" textLength="71.4" lengthAdjust="spacingAndGlyphs">PSD size:2048</text>
<text x="994.1" y="39.5" font-size="11" font-weight="bold" textLength="63.0" lengthAdjust="spacingAndGlyphs">Overlap(%):0</text>
<text x="1082.5" y="39.5" font-size="11" font-weight="bold" textLength="100.4" lengthAdjust="spacingAndGlyphs">TimeRes.(sec):4.096</text>
</svg>
</body></html>
